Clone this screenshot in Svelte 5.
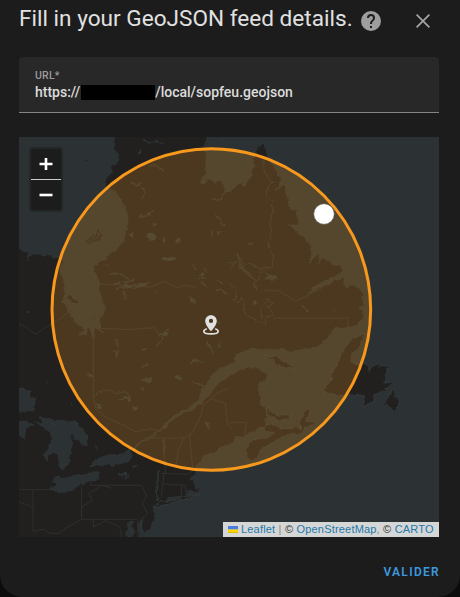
<script>
  let url = $state({ start: 'https://', end: '/local/sopfeu.geojson' });
  const ocean = 'M562 0L556 22L562 60L560 105L545 133L575 125L588 138L602 127L622 150L603 190L616 170L632 162L650 150L670 135L677 150L685 127L696 128L698 98L708 88L703 65L714 55L717 31L729 18L741 35L742 50L757 80L773 103L788 130L772 158L795 143L804 175L813 205L838 236L837 266L808 262L833 280L858 305L879 330L870 379L888 354L902 353L897 382L911 360L937 379L961 383L975 397L962 415L922 427L888 449L872 468L900 454L950 430L978 417L973 437L986 456L995 442L1018 450L1031 470L1034 507L1017 513L1033 520L1032 545L1002 570L948 573L930 595L908 622L887 633L850 638L825 644L778 636L700 637L672 642L652 658L643 674L631 685L603 694L580 715L558 750L538 787L510 817L474 830L451 850L430 867L418 885L440 867L474 837L515 823L548 800L573 770L598 738L630 717L654 701L690 693L720 696L745 712L742 731L721 737L716 755L726 776L723 800L740 809L747 838L735 850L748 863L720 873L700 885L675 898L648 899L645 917L626 923L605 929L596 940L574 952L556 956L544 974L528 989L527 1008L516 1021L525 1036L531 1055L551 1057L531 1065L503 1059L501 1075L450 1082L413 1110L404 1113L410 1129L400 1159L383 1181L376 1210L1270 1210V-10H562Z';
  const waters = [
    'M-9 -9H287L284 28L299 53L291 81L277 90L279 107L265 118L258 137L271 154L294 171L314 200L326 239L325 275L309 316L280 351L219 388L229 412L242 434L239 456L249 488L258 525L246 541L243 557L250 590L237 574L228 567L221 602L208 566L201 593L181 591L191 577L171 557L151 525L130 488L136 465L134 430L123 402L130 373L116 362L62 351L35 355L26 368L25 351L-9 331Z',
    'M-9 752L37 760L33 775L49 788L43 821L-9 823Z',
    'M45 855L76 858L111 860L135 872L151 891L162 918L151 953L148 982L132 999L122 986L116 951L101 946L81 969L73 956L91 935L97 900L77 872Z',
    'M100 857L152 860L158 854L181 862L190 878L207 897L202 910L210 925L189 925L173 909L150 888Z',
    'M215 987L228 969L262 955L305 951L331 940L340 955L331 972L286 985L249 982Z',
    'M90 1051L114 1042L101 1034L106 1020L122 1018L120 1030L135 1025L180 1010L240 1007L238 1023L186 1042L157 1061L121 1070Z',
    'M-9 854L25 852L42 863L20 873L16 906L-9 893Z',
    'M60 838L94 851L145 850L180 862L102 861L74 855Z',
    'M323 1209L326 1159L343 1150L338 1170L347 1175L336 1209ZM360 1209L358 1160L371 1144L369 1168L383 1198Z'
  ];
  const islands = [
    'M138 478L156 475L178 489L182 502L155 498Z',
    'M736 655L775 660L800 676L831 698L801 694L775 684L758 667Z',
    'M914 760L939 726L935 714L954 680L966 652L990 610L1014 600L1035 590L1026 625L1004 646L996 674L1017 681L1047 683L1050 706L1063 684L1079 679L1078 690L1109 687L1095 716L1105 725L1094 741L1129 729L1107 752L1094 754L1112 766L1088 762L1068 776L1051 803L1030 808L1038 781L1017 772L975 776L925 770L912 765Z',
    'M1128 753L1125 777L1137 774L1139 810L1128 821L1112 811L1103 804L1089 806L1106 789L1112 767Z',
    'M743 806L752 821L779 838L814 830L812 846L784 851L755 839L743 825Z',
    'M732 867L754 858L786 875L821 871L854 876L846 887L792 899L761 918L736 931L719 949L713 966L696 973L682 958L679 938L694 916L716 905L740 907L766 887L733 882Z',
    'M840 866L845 840L874 807L870 835L861 851L890 850L884 863L862 870L849 880Z',
    'M410 1104L426 1093L460 1091L492 1078L541 1076L478 1092L440 1103L402 1113Z'
  ];
  const belcher = 'M203 318L217 300M212 322L226 292M222 318L240 278M232 313L248 290M198 70L208 66M220 543L228 545';
  const borders = 'M0 563C30 563 40 600 55 588L150 526M240 440L330 446L396 450L433 433L475 452L500 445L530 451M248 574L330 578L405 572L424 600M223 580V782L232 818L263 842L310 863L350 884L397 875L427 883M378 903H495L520 888L544 840L553 807L575 785L595 792L619 798L625 860L641 881M495 903L478 940L470 995M433 903L440 1010M511 890L521 990M427 1009L506 1012L523 1000M435 1007L427 1082M430 1041L500 1045L500 1075M487 1045V1077M215 1031V1045H367L384 1077L370 1097L386 1130L367 1147M188 1050V1147H355L357 1200M0 1058H98M42 1058V1182L74 1177L90 1188L120 1190L139 1174L188 1147V1110L220 1090L210 1069L248 1045L278 1054M223 1147V1170L260 1151L302 1169L308 1200M0 1095L30 1105L47 1120M735 459L780 462L830 493L875 470L908 455M764 543H988V571M630 858L655 855L682 858L678 895M553 807L580 780L600 765L625 755';
  const boundary = 'M728 73L735 70L736 105L750 127L765 133L743 151L741 172L760 195L762 222L752 259L760 285L747 314L750 340L765 350L760 389L730 391L728 399L694 379L677 385L655 352L667 400L692 407L705 433L710 459M655 352L667 385L690 416L715 431L730 401M630 380L650 370L636 396M630 438L653 456L642 490L652 498L672 485L675 525L710 550L740 562L741 542L762 535L748 510L764 497L740 486L725 516L731 547M223 780L240 765L270 758L290 770L320 765L331 785';
  const creeks = 'M378 10L395 16L412 13L430 20M389 84L408 87L430 99M335 136L352 143L367 141M367 152L377 160L372 182M359 237L385 238L402 220M383 230L395 238M581 190L600 184M590 232L605 252L615 266M578 280L580 296M597 290L612 284M272 415L305 411L330 427M286 441L345 430M290 454L330 452M340 445L388 439M345 452L370 446M314 462L320 488M521 382L530 395M550 392L565 405M536 428L560 425M545 440L570 448M590 430L612 440M600 455L626 470M508 480L530 500M585 545L603 560M255 382L272 386M292 609L298 630M283 645L302 648M292 660L300 640M369 641L384 634M367 688L384 684M366 730L400 722M380 735L398 730M515 681L532 666M530 668L551 678M567 615L583 652M600 630L605 615M557 860L568 850M567 875L570 855M318 776L328 798M230 800L247 808M202 709L225 722M300 788L330 785M297 1010L310 1020M317 1008L322 1025M330 1010L326 1022M340 988L354 991M688 318L703 320M737 400L750 420M737 425L778 427M748 415L762 433M667 390L674 405M848 507L866 523M703 500L713 492M415 628L428 600M430 590L450 577M944 520L950 515M78 738L88 732M155 795L156 810M226 923L230 935';
  const ponds = [[396, 299, 12, 9], [450, 365, 22, 6], [478, 311, 7, 6], [435, 310, 4, 7], [477, 724, 10, 7], [327, 446, 13, 5], [365, 443, 14, 5], [520, 492, 8, 5], [385, 726, 14, 5], [335, 294, 8, 7], [365, 45, 6, 5], [348, 814, 6, 4], [435, 592, 16, 5], [758, 421, 12, 6], [555, 133, 12, 5], [711, 500, 6, 4], [600, 290, 5, 7], [530, 674, 10, 4], [565, 858, 4, 8], [410, 462, 3, 3], [28, 524, 4, 5], [372, 756, 6, 3], [312, 1013, 5, 5], [550, 412, 6, 5], [597, 458, 6, 5], [210, 712, 7, 4], [240, 812, 4, 4], [330, 790, 5, 4], [405, 265, 6, 3], [612, 12, 8, 5]];
</script>

<div class="backdrop">
  <section class="dialog">
    <header>
      <h1>Fill in your GeoJSON feed details.</h1>
      <svg class="help" viewBox="2 2 20 20"><path fill="#9e9e9e" d="M15.07 11.25L14.17 12.17C13.45 12.89 13 13.5 13 15H11V14.5C11 13.39 11.45 12.39 12.17 11.67L13.41 10.41C13.78 10.05 14 9.55 14 9A2 2 0 0 0 10 9H8A4 4 0 0 1 16 9C16 9.88 15.64 10.67 15.07 11.25M13 19H11V17H13M12 2A10 10 0 1 0 22 12A10 10 0 0 0 12 2Z" /></svg>
      <svg class="close" viewBox="0 0 14 14"><path d="M.6.6L13.4 13.4M13.4.6L.6 13.4" stroke="#a8a8a8" stroke-width="1.6" /></svg>
    </header>

    <div class="field">
      <span class="label">URL*</span>
      <div class="value"><span>{url.start}</span><i></i><span>{url.end}</span></div>
    </div>

    <div class="map">
      <svg class="tiles" viewBox="0 0 1260 1200" preserveAspectRatio="none">
        <defs>
          <filter id="coast" x="-10" y="-10" width="1280" height="1220" filterUnits="userSpaceOnUse" color-interpolation-filters="sRGB">
            <feTurbulence type="fractalNoise" baseFrequency="0.05" numOctaves="3" seed="4" result="n" />
            <feDisplacementMap in="SourceGraphic" in2="n" scale="16" xChannelSelector="R" yChannelSelector="G" />
          </filter>
        </defs>
        <rect width="1260" height="1200" fill="#21201f" />
        <g filter="url(#coast)">
          <g fill="#2c3233" stroke="#313839" stroke-width="2">
            <path d={ocean} />
            {#each waters as d}<path {d} />{/each}
          </g>
          <g fill="#21201f" stroke="#33393a" stroke-width="3">
            {#each islands as d}<path {d} />{/each}
          </g>
          <path d={belcher} fill="none" stroke="#21201f" stroke-width="4" />
          <g fill="#2e3637">
            {#each ponds as [cx, cy, rx, ry]}<ellipse {cx} {cy} {rx} {ry} />{/each}
          </g>
          <path d={creeks} fill="none" stroke="#2e3637" stroke-width="4" />
          <path d={boundary} fill="none" stroke="#30373a" stroke-width="2.4" />
          <path d="M418 885L395 900L370 910L345 935L328 945M515 734L545 742L560 750M433 908L436 950M418 1000L413 1095" fill="none" stroke="#2c3436" stroke-width="5" />
        </g>
        <path d={borders} fill="none" stroke="#303131" stroke-width="2.5" />
        <rect x="1240" width="20" height="1200" fill="#2c3233" />
        <rect x="900" y="1180" width="360" height="20" fill="#2c3233" />
        <ellipse cx="577" cy="517.5" rx="478" ry="482.5" fill="#f8991d" fill-opacity=".2" stroke="#f8991d" stroke-width="9" />
        <circle cx="915" cy="231" r="31" fill="#fff" stroke="#59564f" stroke-width="2" />
      </svg>
      <svg class="pin" viewBox="3 1 18 22"><path fill="#e1e1e1" fill-rule="evenodd" d="M12 1C8.1 1 5.5 4 5.5 7.500C5.500 12.500 12 19 12 19S18.500 12.500 18.500 7.500C18.500 4 15.900 1 12 1ZM12 5A2.400 2.400 0 1 1 12 9.800A2.400 2.400 0 1 1 12 5Z" /><path d="M7.300 16.300C5.200 17 4 18 4 19.200C4 21 7.500 22 12 22S20 21 20 19.200C20 18 18.800 17 16.700 16.300" fill="none" stroke="#e1e1e1" stroke-width="1.9" /></svg>
      <div class="zoom"><button aria-label="Zoom in"><svg viewBox="0 0 14 14"><path d="M7 1V13M.5 7H13.5" /></svg></button><button aria-label="Zoom out"><svg viewBox="0 0 14 14"><path d="M.5 7H13.5" /></svg></button></div>
      <div class="credit"><svg viewBox="0 0 10 7"><path fill="#4c7be1" d="M0 0h10v3.500H0z" /><path fill="#ffd500" d="M0 3.500h10v2.500H0z" /><path fill="#e0bc00" d="M0 6h10v1H0z" /></svg><a href="#leaflet">Leaflet</a> <em>|</em> © <a href="#osm">OpenStreetMap</a><em>,</em> © <a href="#carto">CARTO</a></div>
    </div>

    <footer><button>VALIDER</button></footer>
  </section>
</div>

<style>
  :global(body) { background: #0c0c0c; }
  .backdrop { height: 597px; background: #0c0c0c; overflow: hidden; }
  .dialog { box-sizing: border-box; height: 597px; padding: 0 21px 0 19px; background: #1c1c1c; border-radius: 0 0 22px 22px; font-family: Roboto, sans-serif; display: flex; flex-direction: column; }
  header { height: 57px; display: flex; align-items: flex-start; }
  h1 { margin: 5px 0 0; width: 334px; font-size: 22.6px; line-height: 27px; font-weight: 400; color: #e1e1e1; white-space: nowrap; }
  .help { width: 20px; height: 20px; margin: 11px 0 0 8px; }
  .close { width: 14px; height: 14px; margin: 14px 0 0 35px; }
  .field { box-sizing: border-box; height: 56px; padding: 12px 16px 0; background: #282828; border-bottom: 1px solid #858585; border-radius: 4px 4px 0 0; }
  .label { display: block; font-size: 10.5px; line-height: 13px; font-weight: 500; letter-spacing: .2px; color: #9b9b9b; }
  .value { display: flex; align-items: center; height: 20px; font-size: 14px; font-weight: 500; letter-spacing: 0; color: #dcdcdc; white-space: nowrap; }
  .value i { width: 74px; height: 15px; margin-left: 1px; background: #000; }
  .map { position: relative; height: 400px; margin-top: 24px; overflow: hidden; }
  .tiles { display: block; width: 420px; height: 400px; }
  .pin { position: absolute; left: 184px; top: 177px; width: 16px; height: 22px; }
  .zoom { position: absolute; left: 12px; top: 12px; width: 30px; background: #1c1c1c; border-radius: 2px; box-shadow: 0 0 0 2px #222727; }
  .zoom button { display: flex; align-items: center; justify-content: center; width: 30px; height: 30px; padding: 0; border: 0; background: none; }
  .zoom button:first-child { height: 31px; border-bottom: 1px solid #ccc; }
  .zoom svg { width: 14px; height: 14px; fill: none; stroke: #fff; stroke-width: 2.6; }
  .credit { position: absolute; right: 0; bottom: 0; box-sizing: border-box; width: 216px; height: 15px; padding: 0 5px; background: #d5d6d6; color: #333; font: 11px/15px "Liberation Sans", Arial, sans-serif; letter-spacing: .19px; white-space: nowrap; }
  .credit svg { width: 10px; height: 7px; margin-right: 3px; }
  .credit a { color: #2478a9; text-decoration: none; }
  .credit em { font-style: normal; color: #888; }
  footer { display: flex; justify-content: flex-end; margin-top: 26px; }
  footer button { padding: 0; margin-right: -1px; border: 0; background: none; color: #3b99df; font: 600 12px/18px Roboto, sans-serif; letter-spacing: 1.3px; }
</style>
